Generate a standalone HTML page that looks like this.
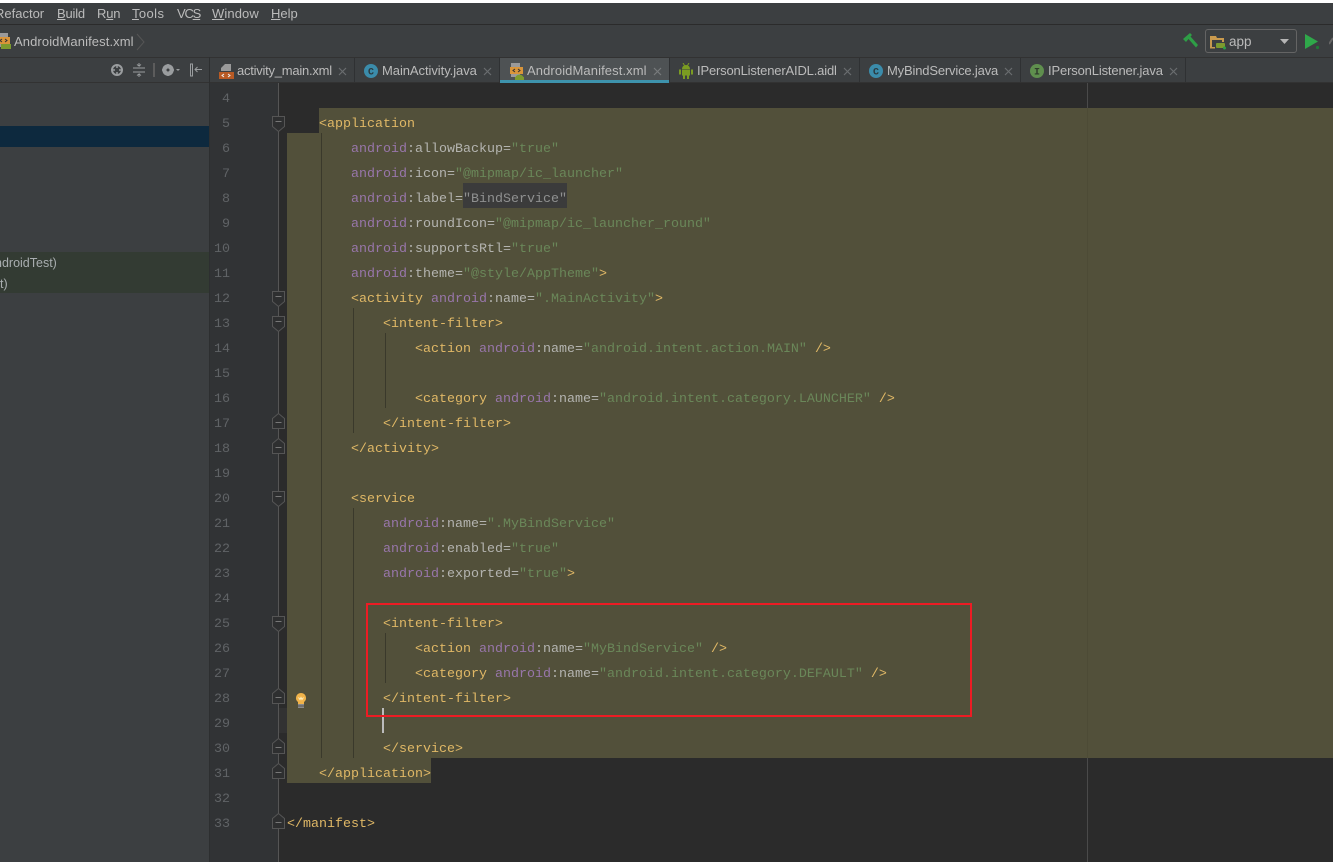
<!DOCTYPE html>
<html><head><meta charset="utf-8"><style>
html,body{margin:0;padding:0;width:1333px;height:862px;overflow:hidden;background:#2b2b2b}
div,span.a{box-sizing:border-box}
.p{position:absolute}
#ui{font-family:"Liberation Sans",sans-serif;font-size:13px;color:#bbbbbb}
.m,.t{position:absolute;white-space:nowrap}
.m{top:6px;line-height:16px;font-size:13px;color:#bbb}
.t{top:62px;line-height:18px;font-size:13px;color:#bbb}
.x{position:absolute;top:67px;width:9px;height:9px}
.s{position:absolute;top:58px;width:1px;height:24px;background:#2f3133}
.n{position:absolute;left:210px;width:20px;margin-top:2px;text-align:right;font:13.33px/25px "Liberation Mono",monospace;color:#606366}
.c{position:absolute;left:287px;margin-top:2px;white-space:pre;font:13.33px/25px "Liberation Mono",monospace;color:#b4b4b0}
.g{color:#e0b866}.v{color:#9876aa}.r2{color:#6a8759}
.f{position:absolute;left:272px}
.i{position:absolute;width:1px;background:#3a392b}
</style></head><body>
<div id="ui">
<div class="p" style="left:0;top:0;width:1333px;height:3px;background:#fff"></div>
<div class="p" style="left:0;top:3px;width:1333px;height:21px;background:#3c3f41"></div>
<div class="p" style="left:0;top:24px;width:1333px;height:1px;background:#2b2b2b"></div>
<div class="p" style="left:0;top:25px;width:1333px;height:32px;background:#3c3f41"></div>
<div class="p" style="left:0;top:57px;width:1333px;height:1px;background:#323232"></div>
<div class="m" style="left:-5px">Refactor</div>
<div class="m" style="left:57px;letter-spacing:-.2px"><u>B</u>uild</div>
<div class="m" style="left:97px;letter-spacing:-.2px">R<u>u</u>n</div>
<div class="m" style="left:132px;letter-spacing:.4px"><u>T</u>ools</div>
<div class="m" style="left:177px;letter-spacing:-1.200px">VC<u>S</u></div>
<div class="m" style="left:212px;letter-spacing:.1px"><u>W</u>indow</div>
<div class="m" style="left:271px"><u>H</u>elp</div>

<svg class="p" style="left:0;top:33px" width="12" height="17"><rect x="-4" y="0" width="12" height="14" fill="#9a9a9a"/><rect x="-4" y="4" width="14" height="7" fill="#d9953a"/><rect x="1" y="11" width="10" height="5" fill="#7d9a2e"/><path d="M2 6l-2 1.500L2 9M5 6l2 1.500L5 9" stroke="#333" fill="none"/></svg>
<div class="m" style="left:14px;top:34px;color:#bbb;letter-spacing:.1px">AndroidManifest.xml</div>
<svg class="p" style="left:136px;top:33px" width="10" height="18"><path d="M1 1l7 8-7 8" stroke="#555" fill="none"/></svg>

<svg class="p" style="left:1182px;top:32px" width="17" height="17"><path d="M1 7L8 1l2 2-1.500 1.500L16 13l-2 2.500L6.500 7 4 10z" fill="#2e9e46"/></svg>
<div class="p" style="left:1205px;top:29px;width:92px;height:24px;border:1px solid #646464;border-radius:3px;background:#3c3f41"></div>
<svg class="p" style="left:1209px;top:35px" width="18" height="15"><path d="M1 1h6l1 2h7v4h-2V5H3v7h3v1.500H1z" fill="#c99a4e"/><rect x="7" y="8" width="9" height="5" rx="1" fill="#7d9a2e"/><circle cx="15.500" cy="13" r="1.500" fill="#2e9e46"/></svg>
<div class="m" style="left:1229px;top:34px;color:#bbb;font-size:13.500px">app</div>
<svg class="p" style="left:1280px;top:39px" width="10" height="6"><path d="M0 0h9L4.500 5z" fill="#b5b5b5"/></svg>
<svg class="p" style="left:1305px;top:34px" width="16" height="16"><path d="M0 0l13 7.500L0 15z" fill="#2fa84a"/><circle cx="12.500" cy="13.500" r="1.600" fill="#1f7a35"/></svg>
<svg class="p" style="left:1329px;top:36px" width="4" height="10"><path d="M0 8l4-6" stroke="#666" stroke-width="2"/></svg>

<!-- left panel -->
<div class="p" style="left:0;top:58px;width:209px;height:804px;background:#3c3f41"></div>
<div class="p" style="left:209px;top:57px;width:1px;height:805px;background:#2d2f30"></div>
<div class="p" style="left:0;top:82px;width:209px;height:1px;background:#323232"></div>
<div class="p" style="left:0;top:126px;width:209px;height:21px;background:#0d293e"></div>
<div class="p" style="left:0;top:252px;width:209px;height:41px;background:#333b33"></div>
<div class="m" style="left:-5px;top:255px;font-size:12.500px;color:#a8adaf">ndroidTest)</div>
<div class="m" style="left:0;top:276px;font-size:12.500px;color:#a8adaf">t)</div>
<svg class="p" style="left:110px;top:63px" width="100" height="15" fill="none" stroke="#9a9d9f">
<circle cx="7" cy="7" r="5" stroke-width="2"/><path d="M7 3v2M7 9v2M3 7h2M9 7h2" stroke-width="1.500"/>
<path d="M23 5h12M23 9h12M29 0v3l-2-1.500M29 3l2-1.500M29 14v-3l-2 1.500M29 11l2 1.500" stroke-width="1"/>
<path d="M44 0v14" stroke="#666" stroke-width="1.500"/>
<circle cx="58" cy="7" r="4" stroke-width="3.500"/><path d="M58 1v12M52 7h12M54 3l8 8M62 3l-8 8" stroke-width="1.500"/><circle cx="58" cy="7" r="1.500" fill="#3c3f41" stroke="none"/>
<path d="M66 6h4l-2 2z" fill="#9a9d9f" stroke="none"/>
<path d="M80.500 1v12h2V1zM92 6.500h-7M87.500 4L85 6.500 87.500 9" stroke-width="1"/>
</svg>

<!-- tabs -->
<div class="p" style="left:210px;top:58px;width:1123px;height:24px;background:#3c3f41"></div>
<div class="p" style="left:210px;top:82px;width:1123px;height:1px;background:#323232"></div>
<div class="p" style="left:500px;top:58px;width:169px;height:22px;background:#4e5254"></div>
<div class="p" style="left:500px;top:80px;width:169px;height:3px;background:#3e93ad"></div>
<div class="s" style="left:354px"></div><div class="s" style="left:499px"></div><div class="s" style="left:669px"></div><div class="s" style="left:859px"></div><div class="s" style="left:1020px"></div><div class="s" style="left:1185px"></div>

<svg class="p" style="left:219px;top:63px" width="15" height="16"><path d="M6 1h6v7H2V5z" fill="#9a9a9a"/><rect y="9" width="15" height="7" fill="#b85a24"/><path d="M5 11l-2 1.500L5 14M9 11l2 1.500L9 14" stroke="#eee" fill="none"/></svg>
<div class="t" style="left:237px;letter-spacing:-.24px">activity_main.xml</div>
<svg class="p" style="left:364px;top:64px" width="14" height="14"><circle cx="7" cy="7" r="7" fill="#3b8cab"/><text x="7" y="10.500" text-anchor="middle" font-family="Liberation Mono" font-size="10" font-weight="bold" fill="#2b3a40">C</text></svg>
<div class="t" style="left:382px;letter-spacing:-.06px">MainActivity.java</div>
<svg class="p" style="left:510px;top:63px" width="15" height="17"><rect x="1" y="0" width="9" height="14" fill="#9a9a9a"/><rect x="0" y="4" width="13" height="7" fill="#d9953a"/><path d="M5 6l-2 1.500L5 9M8 6l2 1.500L8 9" stroke="#333" fill="none"/><path d="M5 16a4 4 0 0 1 9 0z" fill="#7d9a2e"/><rect x="5" y="14" width="9" height="3" fill="#7d9a2e"/></svg>
<div class="t" style="left:527px;letter-spacing:.1px">AndroidManifest.xml</div>
<svg class="p" style="left:679px;top:63px" width="14" height="16" fill="#7b9c22"><path d="M3 6a4 4 0 0 1 8 0z"/><rect x="3" y="6.500" width="8" height="6"/><rect y="6.500" width="2" height="5"/><rect x="12" y="6.500" width="2" height="5"/><rect x="4" y="12" width="2" height="4"/><rect x="8" y="12" width="2" height="4"/><path d="M4 0l1.500 2.500M10 0L8.500 2.500" stroke="#7b9c22"/></svg>
<div class="t" style="left:697px;letter-spacing:-.17px">IPersonListenerAIDL.aidl</div>
<svg class="p" style="left:869px;top:64px" width="14" height="14"><circle cx="7" cy="7" r="7" fill="#3b8cab"/><text x="7" y="10.500" text-anchor="middle" font-family="Liberation Mono" font-size="10" font-weight="bold" fill="#2b3a40">C</text></svg>
<div class="t" style="left:887px;letter-spacing:-.17px">MyBindService.java</div>
<svg class="p" style="left:1030px;top:64px" width="14" height="14"><circle cx="7" cy="7" r="7" fill="#5f8f4e"/><text x="7" y="10.500" text-anchor="middle" font-family="Liberation Mono" font-size="10" font-weight="bold" fill="#2f3b2c">I</text></svg>
<div class="t" style="left:1048px;letter-spacing:-.15px">IPersonListener.java</div>
<svg class="x" style="left:338px"><path d="M1 1l7 7M8 1L1 8" stroke="#6a6d6f" stroke-width="1.200"/></svg>
<svg class="x" style="left:483px"><path d="M1 1l7 7M8 1L1 8" stroke="#6a6d6f" stroke-width="1.200"/></svg>
<svg class="x" style="left:653px"><path d="M1 1l7 7M8 1L1 8" stroke="#787b7d" stroke-width="1.200"/></svg>
<svg class="x" style="left:843px"><path d="M1 1l7 7M8 1L1 8" stroke="#6a6d6f" stroke-width="1.200"/></svg>
<svg class="x" style="left:1004px"><path d="M1 1l7 7M8 1L1 8" stroke="#6a6d6f" stroke-width="1.200"/></svg>
<svg class="x" style="left:1169px"><path d="M1 1l7 7M8 1L1 8" stroke="#6a6d6f" stroke-width="1.200"/></svg>

<!-- editor -->
<div class="p" style="left:210px;top:83px;width:68px;height:779px;background:#313335"></div>
<div class="p" style="left:278px;top:83px;width:1px;height:779px;background:#555555"></div>
<div class="p" style="left:1087px;top:83px;width:1px;height:779px;background:#4a4a4a"></div>
<div class="p" style="left:319px;top:108px;width:1014px;height:25px;background:#52503a"></div>
<div class="p" style="left:287px;top:133px;width:1046px;height:625px;background:#52503a"></div>
<div class="p" style="left:287px;top:758px;width:144px;height:25px;background:#52503a"></div>
<div class="p" style="left:279px;top:708px;width:8px;height:25px;background:#323232"></div>
<div class="p" style="left:1087px;top:108px;width:1px;height:650px;background:#4d4b36"></div>
<div class="p" style="left:463px;top:183px;width:104px;height:25px;background:#3b3b3b"></div>

<div class="i" style="left:321px;top:133px;height:625px"></div>
<div class="i" style="left:353px;top:308px;height:125px"></div>
<div class="i" style="left:385px;top:333px;height:75px"></div>
<div class="i" style="left:353px;top:508px;height:250px"></div>
<div class="i" style="left:385px;top:633px;height:50px"></div>

<div class="n" style="top:85px">4</div><div class="n" style="top:110px">5</div><div class="n" style="top:135px">6</div><div class="n" style="top:160px">7</div><div class="n" style="top:185px">8</div><div class="n" style="top:210px">9</div><div class="n" style="top:235px">10</div><div class="n" style="top:260px">11</div><div class="n" style="top:285px">12</div><div class="n" style="top:310px">13</div><div class="n" style="top:335px">14</div><div class="n" style="top:360px">15</div><div class="n" style="top:385px">16</div><div class="n" style="top:410px">17</div><div class="n" style="top:435px">18</div><div class="n" style="top:460px">19</div><div class="n" style="top:485px">20</div><div class="n" style="top:510px">21</div><div class="n" style="top:535px">22</div><div class="n" style="top:560px">23</div><div class="n" style="top:585px">24</div><div class="n" style="top:610px">25</div><div class="n" style="top:635px">26</div><div class="n" style="top:660px">27</div><div class="n" style="top:685px">28</div><div class="n" style="top:710px">29</div><div class="n" style="top:735px">30</div><div class="n" style="top:760px">31</div><div class="n" style="top:785px">32</div><div class="n" style="top:810px">33</div>

<div class="c" style="top:110px">    <span class="g">&lt;application</span></div>
<div class="c" style="top:135px">        <span class="v">android</span>:allowBackup=<span class="r2">"true"</span></div>
<div class="c" style="top:160px">        <span class="v">android</span>:icon=<span class="r2">"@mipmap/ic_launcher"</span></div>
<div class="c" style="top:185px">        <span class="v">android</span>:label=<span style="color:#8f9090">"BindService"</span></div>
<div class="c" style="top:210px">        <span class="v">android</span>:roundIcon=<span class="r2">"@mipmap/ic_launcher_round"</span></div>
<div class="c" style="top:235px">        <span class="v">android</span>:supportsRtl=<span class="r2">"true"</span></div>
<div class="c" style="top:260px">        <span class="v">android</span>:theme=<span class="r2">"@style/AppTheme"</span><span class="g">&gt;</span></div>
<div class="c" style="top:285px">        <span class="g">&lt;activity</span> <span class="v">android</span>:name=<span class="r2">".MainActivity"</span><span class="g">&gt;</span></div>
<div class="c" style="top:310px">            <span class="g">&lt;intent-filter&gt;</span></div>
<div class="c" style="top:335px">                <span class="g">&lt;action</span> <span class="v">android</span>:name=<span class="r2">"android.intent.action.MAIN"</span> <span class="g">/&gt;</span></div>
<div class="c" style="top:385px">                <span class="g">&lt;category</span> <span class="v">android</span>:name=<span class="r2">"android.intent.category.LAUNCHER"</span> <span class="g">/&gt;</span></div>
<div class="c" style="top:410px">            <span class="g">&lt;/intent-filter&gt;</span></div>
<div class="c" style="top:435px">        <span class="g">&lt;/activity&gt;</span></div>
<div class="c" style="top:485px">        <span class="g">&lt;service</span></div>
<div class="c" style="top:510px">            <span class="v">android</span>:name=<span class="r2">".MyBindService"</span></div>
<div class="c" style="top:535px">            <span class="v">android</span>:enabled=<span class="r2">"true"</span></div>
<div class="c" style="top:560px">            <span class="v">android</span>:exported=<span class="r2">"true"</span><span class="g">&gt;</span></div>
<div class="c" style="top:610px">            <span class="g">&lt;intent-filter&gt;</span></div>
<div class="c" style="top:635px">                <span class="g">&lt;action</span> <span class="v">android</span>:name=<span class="r2">"MyBindService"</span> <span class="g">/&gt;</span></div>
<div class="c" style="top:660px">                <span class="g">&lt;category</span> <span class="v">android</span>:name=<span class="r2">"android.intent.category.DEFAULT"</span> <span class="g">/&gt;</span></div>
<div class="c" style="top:685px">            <span class="g">&lt;/intent-filter&gt;</span></div>
<div class="c" style="top:735px">            <span class="g">&lt;/service&gt;</span></div>
<div class="c" style="top:760px">    <span class="g">&lt;/application&gt;</span></div>
<div class="c" style="top:810px"><span class="g">&lt;/manifest&gt;</span></div>

<!-- fold icons -->
<svg class="f" style="top:116px" width="14" height="17"><path d="M.5.500h12v10L6.500 15.500.5 10.500z" fill="#2e2f30" stroke="#555"/><path d="M3.500 5.500h6" stroke="#777"/></svg>
<svg class="f" style="top:291px" width="14" height="17"><path d="M.5.500h12v10L6.500 15.500.5 10.500z" fill="#2e2f30" stroke="#555"/><path d="M3.500 5.500h6" stroke="#777"/></svg>
<svg class="f" style="top:316px" width="14" height="17"><path d="M.5.500h12v10L6.500 15.500.5 10.500z" fill="#2e2f30" stroke="#555"/><path d="M3.500 5.500h6" stroke="#777"/></svg>
<svg class="f" style="top:491px" width="14" height="17"><path d="M.5.500h12v10L6.500 15.500.5 10.500z" fill="#2e2f30" stroke="#555"/><path d="M3.500 5.500h6" stroke="#777"/></svg>
<svg class="f" style="top:616px" width="14" height="17"><path d="M.5.500h12v10L6.500 15.500.5 10.500z" fill="#2e2f30" stroke="#555"/><path d="M3.500 5.500h6" stroke="#777"/></svg>
<svg class="f" style="top:413px" width="14" height="17"><path d="M.5 15.500h12v-10L6.500.500.5 5.500z" fill="#2e2f30" stroke="#555"/><path d="M3.500 9.500h6" stroke="#777"/></svg>
<svg class="f" style="top:438px" width="14" height="17"><path d="M.5 15.500h12v-10L6.500.500.5 5.500z" fill="#2e2f30" stroke="#555"/><path d="M3.500 9.500h6" stroke="#777"/></svg>
<svg class="f" style="top:688px" width="14" height="17"><path d="M.5 15.500h12v-10L6.500.500.5 5.500z" fill="#2e2f30" stroke="#555"/><path d="M3.500 9.500h6" stroke="#777"/></svg>
<svg class="f" style="top:738px" width="14" height="17"><path d="M.5 15.500h12v-10L6.500.500.5 5.500z" fill="#2e2f30" stroke="#555"/><path d="M3.500 9.500h6" stroke="#777"/></svg>
<svg class="f" style="top:763px" width="14" height="17"><path d="M.5 15.500h12v-10L6.500.500.5 5.500z" fill="#2e2f30" stroke="#555"/><path d="M3.500 9.500h6" stroke="#777"/></svg>
<svg class="f" style="top:813px" width="14" height="17"><path d="M.5 15.500h12v-10L6.500.500.5 5.500z" fill="#2e2f30" stroke="#555"/><path d="M3.500 9.500h6" stroke="#777"/></svg>

<!-- bulb -->
<svg class="p" style="left:295px;top:693px" width="12" height="16"><path d="M6 0a5 5 0 0 1 3 9v2H3V9a5 5 0 0 1 3-9z" fill="#f0b34a"/><path d="M3.500 4.500l1.500 2 1-2 1 2 1.500-2" stroke="#fff0c0" fill="none"/><rect x="3" y="11" width="6" height="4" fill="#8a8a8a"/><path d="M3 13h6" stroke="#555"/></svg>

<div class="p" style="left:382px;top:708px;width:2px;height:25px;background:#bbbbbb"></div>
<div class="p" style="left:366px;top:603px;width:606px;height:114px;border:2px solid #ed1c24"></div>
</div>
</body></html>
